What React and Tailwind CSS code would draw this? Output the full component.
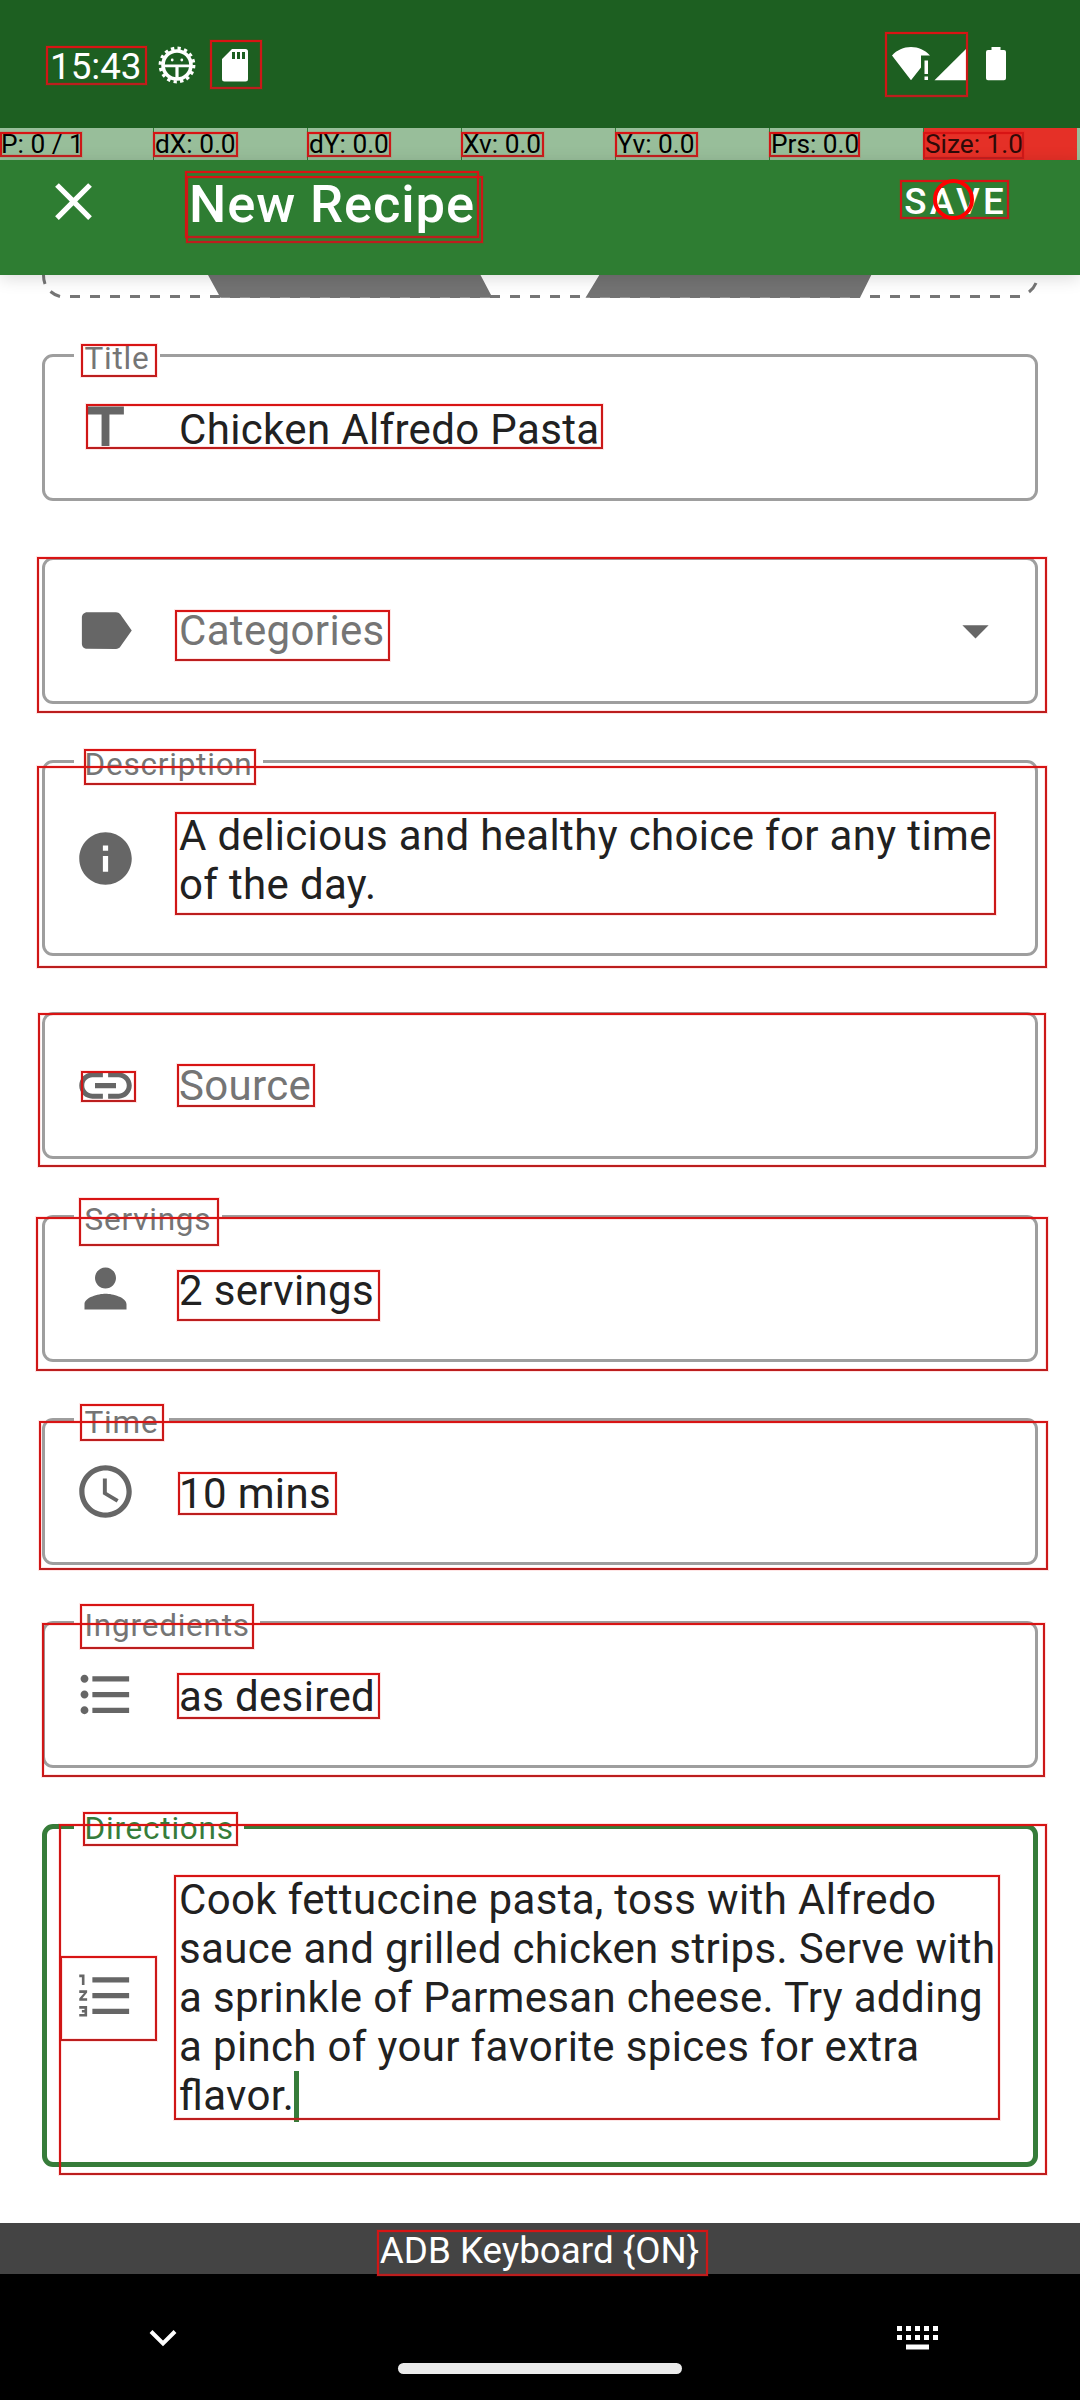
import React from "react";

const ICONS = {
  title: "M5 4v3h5.5v12h3V7H19V4z",
  label:
    "M17.63 5.84C17.27 5.33 16.67 5 16 5L5 5.01C3.9 5.01 3 5.9 3 7v10c0 1.1.9 1.99 2 1.99L16 19c.67 0 1.27-.33 1.63-.84L22 12l-4.37-6.16z",
  info: "M12 2C6.48 2 2 6.48 2 12s4.48 10 10 10 10-4.48 10-10S17.52 2 12 2zm1 15h-2v-6h2v6zm0-8h-2V7h2v2z",
  link: "M3.9 12c0-1.71 1.39-3.1 3.1-3.1h4V7H7c-2.76 0-5 2.24-5 5s2.24 5 5 5h4v-1.9H7c-1.71 0-3.1-1.39-3.1-3.1zM8 13h8v-2H8v2zm9-6h-4v1.9h4c1.71 0 3.1 1.39 3.1 3.1s-1.39 3.1-3.1 3.1h-4V17h4c2.76 0 5-2.24 5-5s-2.24-5-5-5z",
  person:
    "M12 12c2.21 0 4-1.79 4-4s-1.79-4-4-4-4 1.79-4 4 1.79 4 4 4zm0 2c-2.67 0-8 1.34-8 4v2h16v-2c0-2.66-5.33-4-8-4z",
  clock:
    "M11.99 2C6.47 2 2 6.48 2 12s4.47 10 9.99 10C17.52 22 22 17.52 22 12S17.52 2 11.99 2zM12 20c-4.42 0-8-3.58-8-8s3.58-8 8-8 8 3.58 8 8-3.58 8-8 8zm.5-13H11v6l5.25 3.15.75-1.23-4.5-2.67z",
  bullets:
    "M4 10.5c-.83 0-1.5.67-1.5 1.5s.67 1.5 1.5 1.5 1.5-.67 1.5-1.5-.67-1.5-1.5-1.5zm0-6c-.83 0-1.5.67-1.5 1.5S3.17 7.5 4 7.5 5.5 6.83 5.5 6 4.83 4.5 4 4.5zm0 12c-.83 0-1.5.68-1.5 1.5s.68 1.5 1.5 1.5 1.5-.68 1.5-1.5-.67-1.5-1.5-1.5zM7 19h14v-2H7v2zm0-6h14v-2H7v2zm0-8v2h14V5H7z",
  numbers:
    "M2 17h2v.5H3v1h1v.5H2v1h3v-4H2v1zm1-9h1V4H2v1h1v3zm-1 3h1.8L2 13.1v.9h3v-1H3.2L5 10.9V10H2v1zm5-6v2h14V5H7zm0 14h14v-2H7v2zm0-6h14v-2H7v2z",
  caret: "M7 10l5 5 5-5z",
  close:
    "M19 6.41L17.59 5 12 10.59 6.41 5 5 6.41 10.59 12 5 17.59 6.41 19 12 13.41 17.59 19 19 17.59 13.41 12z",
};

function Icon({ name, className = "" }) {
  return (
    <svg viewBox="0 0 24 24" className={`h-[63px] w-[63px] shrink-0 fill-current ${className}`}>
      <path d={ICONS[name]} />
    </svg>
  );
}

function Field({ label, icon, lines, placeholder, focused, caret }) {
  return (
    <div
      className={`relative flex items-center rounded-[11px] ${
        focused
          ? "border-5 border-[#367c3a] pr-[26px] pl-[27px]"
          : "border-3 border-[#9e9e9e] pr-[28px] pl-[29px]"
      }`}
    >
      {label && (
        <span
          className={`absolute bg-white px-[10.5px] text-[31.5px] leading-[37px] tracking-[0.78px] whitespace-nowrap ${
            focused ? "-top-[19px] left-[27px] text-[#367c3a]" : "-top-[17px] left-[29px] text-[#757575]"
          }`}
        >
          {label}
        </span>
      )}
      <Icon name={icon} className="text-[#666666]" />
      <div
        className={`ml-[42px] grow text-[42px] leading-[49px] tracking-[0.345px] whitespace-nowrap [font-feature-settings:'liga'_1] ${
          placeholder
            ? "pt-[46px] pb-[46px] text-[#757575]"
            : focused
              ? "pt-[46px] pb-[42px] text-[#212121]"
              : "pt-[48px] pb-[44px] text-[#212121]"
        }`}
      >
        {lines.map((line, i) => (
          <div key={line} className="flex h-[49px]">
            {line}
            {focused && i === lines.length - 1 && (
              <span className="h-[51px] w-[5px] shrink-0 bg-[#367c3a]" />
            )}
          </div>
        ))}
      </div>
      {caret && <Icon name="caret" className="text-[#666666]" />}
    </div>
  );
}

const STATS = ["P: 0 / 1", "dX: 0.0", "dY: 0.0", "Xv: 0.0", "Yv: 0.0", "Prs: 0.0"];

// left, top, right, bottom of every highlighted view
const MARKS = [
  [46, 46, 147, 85],
  [210, 40, 262, 89],
  [885, 32, 968, 97],
  [0, 132, 82, 157],
  [153, 132, 238, 157],
  [307, 132, 391, 157],
  [461, 132, 544, 157],
  [615, 132, 698, 157],
  [769, 132, 860, 157],
  [923, 132, 1024, 159],
  [185, 171, 479, 238],
  [186, 176, 483, 243],
  [900, 180, 1009, 219],
  [81, 344, 157, 377],
  [86, 404, 603, 449],
  [37, 557, 1047, 713],
  [175, 610, 390, 661],
  [84, 749, 256, 785],
  [37, 766, 1047, 968],
  [175, 812, 996, 915],
  [38, 1013, 1046, 1167],
  [81, 1071, 136, 1102],
  [177, 1064, 315, 1107],
  [79, 1198, 219, 1246],
  [36, 1217, 1048, 1371],
  [177, 1270, 380, 1321],
  [80, 1404, 164, 1441],
  [39, 1421, 1048, 1570],
  [178, 1472, 337, 1515],
  [80, 1604, 254, 1649],
  [42, 1623, 1045, 1777],
  [177, 1673, 380, 1719],
  [83, 1812, 238, 1846],
  [59, 1824, 1047, 2175],
  [60, 1956, 157, 2041],
  [174, 1875, 1000, 2120],
  [377, 2230, 708, 2276],
];

function StatusBar() {
  return (
    <div className="flex h-[128px] items-start bg-[#1d5f21] text-white">
      <span className="mt-[45px] ml-[50px] w-[94px] text-[36.75px] leading-[43px] whitespace-nowrap">15:43</span>
      <svg viewBox="0 0 40 40" className="mt-[45px] ml-[13px] h-[40px] w-[40px]">
        <circle cx="20" cy="20" r="14" fill="none" stroke="white" strokeWidth="3.6" />
        <circle cx="20" cy="20" r="16.8" fill="none" stroke="white" strokeWidth="3.2" strokeDasharray="3.3 3.298" />
        <path d="M5 19.5h30v2.8H21.6V34h-3.2V22.3H5z" fill="white" />
        <circle cx="15.2" cy="15" r="1.4" fill="white" />
        <circle cx="24.8" cy="15" r="1.4" fill="white" />
      </svg>
      <svg viewBox="0 0 26 33" className="mt-[49px] ml-[25px] h-[33px] w-[26px]">
        <path
          d="M10 0h13.500a2.500 2.500 0 0 1 2.500 2.500v27.500a2.500 2.500 0 0 1-2.500 2.500h-21a2.500 2.500 0 0 1-2.500-2.500V10z"
          fill="white"
        />
        <path d="M10 3h3v7h-3zM15 3h3v7h-3zM20 3h3v7h-3z" fill="#1d5f21" />
      </svg>
      <svg viewBox="0 0 116 34" className="mt-[47px] ml-auto mr-[73px] h-[34px] w-[116px] fill-white">
        <path d="M1 8.500C6 3 12.500 0 20 0s14 3 19 8.500h-9v12L20 33.300z" />
        <path d="M33.500 13.500h3.500v13.500h-3.500zM33.500 29.500h3.500v3.500h-3.500z" />
        <path d="M43.500 33.300H75V2z" />
        <path d="M100.500 0h9v3h3.500a2 2 0 0 1 2 2v26.300a2 2 0 0 1-2 2h-16a2 2 0 0 1-2-2V5a2 2 0 0 1 2-2h3.500z" />
      </svg>
    </div>
  );
}

function PointerStrip() {
  return (
    <div className="flex h-[32px] bg-[#2e7d32] text-[26.25px] leading-[31px] text-black">
      {STATS.map((s) => (
        <div key={s} className="mr-px w-[153px] shrink-0 bg-[#98be9a] pl-px pt-px whitespace-nowrap">
          {s}
        </div>
      ))}
      <div className="w-[153px] shrink-0 bg-[#e53027] pl-px pt-px whitespace-nowrap text-[#2e0a08]">Size: 1.0</div>
      <div className="grow bg-[#98be9a]" />
    </div>
  );
}

export default function App() {
  return (
    <div className="relative flex h-[2400px] w-[1080px] flex-col overflow-hidden bg-white font-[Roboto,sans-serif]">
      <StatusBar />
      <PointerStrip />
      <header className="relative z-10 flex h-[115px] shrink-0 items-start bg-[#2e7d32] text-white shadow-[0_3px_16px_rgba(0,0,0,0.15)]">
        <Icon name="close" className="mt-[10px] ml-[42px]" />
        <h1 className="mt-[13px] ml-[84px] text-[52.5px] leading-[62px] font-medium tracking-[0.9px] whitespace-nowrap">
          New Recipe
        </h1>
        <span className="mt-[20px] mr-[73px] ml-auto text-[36.75px] leading-[43px] font-medium tracking-[3.28px]">
          SAVE
        </span>
      </header>

      <svg viewBox="0 275 1080 25" className="h-[25px] w-[1080px] shrink-0">
        <g fill="none" stroke="#757575" strokeWidth="3">
          <path d="M43.500 275q0 5 1.500 9M50.500 291.500q4 3.500 9.500 5M1036 283q-2 5-7 9" />
          <path d="M70 296.500H1020" strokeDasharray="10 10" />
        </g>
        <path d="M208 275H480.500L492.500 297.700H220.500zM599.300 275H871.300L860 297.700H585.500z" fill="#737373" />
      </svg>

      <main className="flex grow flex-col gap-[56px] px-[42px] pt-[54px]">
        <Field label="Title" icon="title" lines={["Chicken Alfredo Pasta"]} />
        <Field icon="label" lines={["Categories"]} placeholder caret />
        <Field label="Description" icon="info" lines={["A delicious and healthy choice for any time", "of the day."]} />
        <Field icon="link" lines={["Source"]} placeholder />
        <Field label="Servings" icon="person" lines={["2 servings"]} />
        <Field label="Time" icon="clock" lines={["10 mins"]} />
        <Field label="Ingredients" icon="bullets" lines={["as desired"]} />
        <Field
          label="Directions"
          icon="numbers"
          focused
          lines={[
            "Cook fettuccine pasta, toss with Alfredo",
            "sauce and grilled chicken strips. Serve with",
            "a sprinkle of Parmesan cheese. Try adding",
            "a pinch of your favorite spices for extra",
            "flavor.",
          ]}
        />
      </main>

      <div className="flex h-[51px] shrink-0 justify-center bg-[#444444] pt-[6px] text-[36.75px] leading-[43px] text-white">
        <span className="mr-[1px]">ADB Keyboard {"{ON}"}</span>
      </div>
      <footer className="flex h-[126px] shrink-0 items-start bg-black">
        <svg viewBox="0 0 28 18" className="mt-[55px] ml-[149px] h-[18px] w-[28px]">
          <path d="M2 2.500L14 14.500L26 2.500" fill="none" stroke="white" strokeWidth="4" />
        </svg>
        <div className="mt-[89px] ml-[221px] h-[11px] w-[284px] rounded-full bg-[#ebebeb]" />
        <svg viewBox="0 0 41 24" className="mt-[52px] ml-[215px] h-[24px] w-[41px]">
          <path d="M0 2.500H41M0 11.500H41" stroke="white" strokeWidth="5" strokeDasharray="5 4" />
          <path d="M9 18.500h23v5H9z" fill="white" />
        </svg>
      </footer>

      {MARKS.map(([l, t, r, b]) => (
        <div
          key={`${l}-${t}`}
          className="absolute z-20 border-2 border-t-[#d81414] border-r-[#cc1818] border-b-[#bc1e1e] border-l-[#d01616] shadow-[0_0_0_1px_rgba(255,0,0,0.1),inset_0_0_0_1px_rgba(255,0,0,0.1)]"
          style={{ left: l, top: t, width: r - l, height: b - t }}
        />
      ))}
      <div className="absolute top-[179px] left-[933px] z-30 h-[41px] w-[41px] rounded-full border-4 border-[#ff0000]" />
    </div>
  );
}
